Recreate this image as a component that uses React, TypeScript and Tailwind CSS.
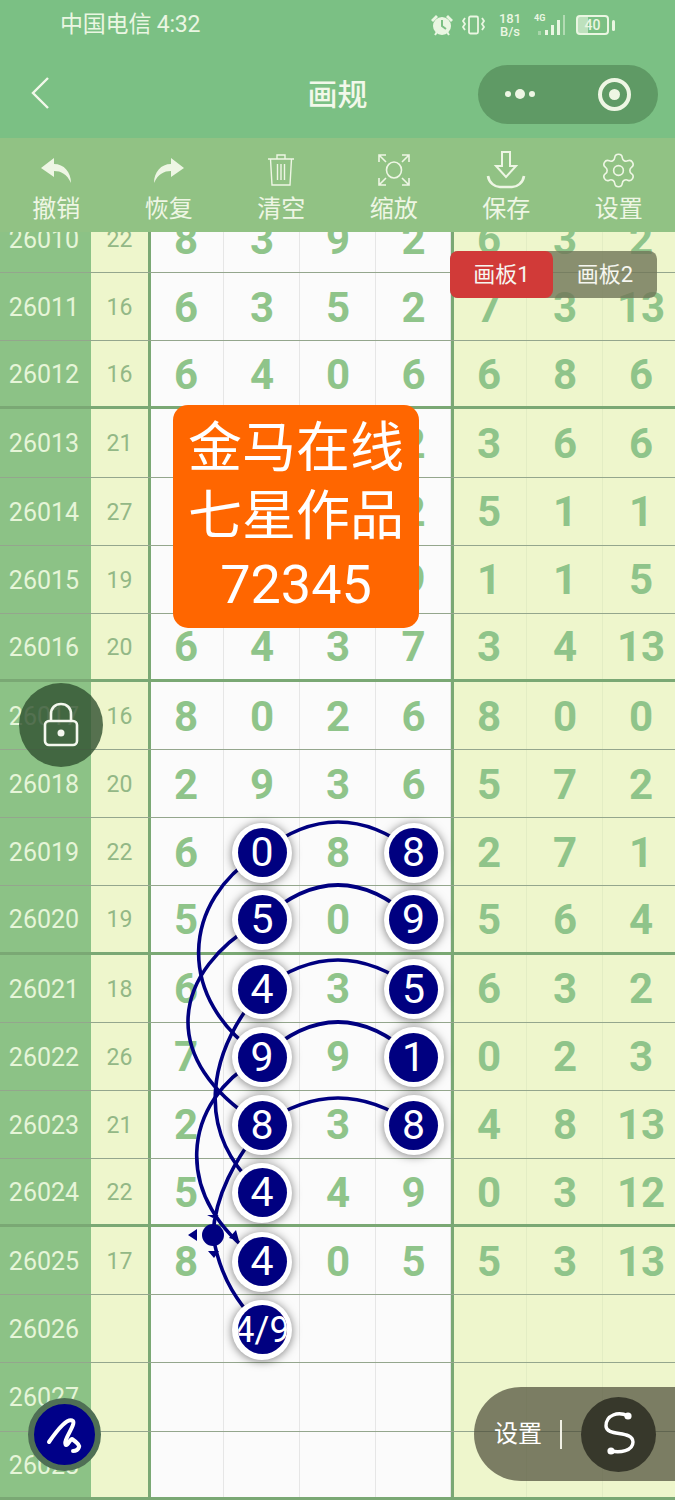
import React, { FC } from "react";
import { Settings } from "lucide-react";

type Row = {
  id: string;
  sum: string;
  cells: string[];
};

const rows: Row[] = [
  { id: "26010", sum: "22", cells: ["8", "3", "9", "2", "6", "3", "2"] },
  { id: "26011", sum: "16", cells: ["6", "3", "5", "2", "7", "3", "13"] },
  { id: "26012", sum: "16", cells: ["6", "4", "0", "6", "6", "8", "6"] },
  { id: "26013", sum: "21", cells: ["1", "8", "5", "2", "3", "6", "6"] },
  { id: "26014", sum: "27", cells: ["9", "7", "4", "2", "5", "1", "1"] },
  { id: "26015", sum: "19", cells: ["3", "2", "6", "9", "1", "1", "5"] },
  { id: "26016", sum: "20", cells: ["6", "4", "3", "7", "3", "4", "13"] },
  { id: "26017", sum: "16", cells: ["8", "0", "2", "6", "8", "0", "0"] },
  { id: "26018", sum: "20", cells: ["2", "9", "3", "6", "5", "7", "2"] },
  { id: "26019", sum: "22", cells: ["6", "0", "8", "8", "2", "7", "1"] },
  { id: "26020", sum: "19", cells: ["5", "5", "0", "9", "5", "6", "4"] },
  { id: "26021", sum: "18", cells: ["6", "4", "3", "5", "6", "3", "2"] },
  { id: "26022", sum: "26", cells: ["7", "9", "9", "1", "0", "2", "3"] },
  { id: "26023", sum: "21", cells: ["2", "8", "3", "8", "4", "8", "13"] },
  { id: "26024", sum: "22", cells: ["5", "4", "4", "9", "0", "3", "12"] },
  { id: "26025", sum: "17", cells: ["8", "4", "0", "5", "5", "3", "13"] },
  { id: "26026", sum: "", cells: ["", "4/9", "", "", "", "", ""] },
  { id: "26027", sum: "", cells: ["", "", "", "", "", "", ""] },
  { id: "26028", sum: "", cells: ["", "", "", "", "", "", ""] },
];

// which cells carry a round marker: row id -> cell indexes
const marked: Record<string, number[]> = {
  "26019": [1, 3],
  "26020": [1, 3],
  "26021": [1, 3],
  "26022": [1, 3],
  "26023": [1, 3],
  "26024": [1],
  "26025": [1],
  "26026": [1],
};

const Marker: FC<{ value: string }> = ({ value }) => (
  <div className="relative z-20 flex h-[60px] w-[60px] items-center justify-center rounded-full bg-white shadow-[0_1px_10px_rgba(0,0,0,0.5)]">
    <div
      className={`flex h-[49px] w-[49px] items-center justify-center overflow-hidden whitespace-nowrap rounded-full bg-[#000080] font-normal leading-none text-white ${
        value.length > 1 ? "text-[36px]" : "text-[41px]"
      }`}
    >
      {value}
    </div>
  </div>
);

const ToolIcon: FC<{ name: string }> = ({ name }) => {
  if (name === "undo") {
    return (
      <svg width="32" height="28" viewBox="0 0 32 28" fill="#eef6e4">
        <path d="M14 2 L1 12 L14 21 V15 C21 15 27 18 31 27 C31 16 24 8 14 8 Z" />
      </svg>
    );
  }
  if (name === "redo") {
    return (
      <svg width="32" height="28" viewBox="0 0 32 28" fill="#eef6e4">
        <path d="M18 2 L31 12 L18 21 V15 C11 15 5 18 1 27 C1 16 8 8 18 8 Z" />
      </svg>
    );
  }
  if (name === "trash") {
    return (
      <svg width="28" height="34" viewBox="0 0 28 34" fill="none" stroke="#eef6e4" strokeWidth="1.4">
        <path d="M1 6 H27 M10 6 V2 H18 V6 M3.5 6 L5 32 H23 L24.5 6 M10.5 11 V27 M14 11 V27 M17.5 11 V27" />
      </svg>
    );
  }
  if (name === "zoom") {
    return (
      <svg width="34" height="34" viewBox="0 0 34 34" fill="none" stroke="#eef6e4" strokeWidth="1.6">
        <path d="M2 9 V2 H9 M2 2 L9 9 M32 9 V2 H25 M32 2 L25 9 M2 25 V32 H9 M2 32 L9 25 M32 25 V32 H25 M32 32 L25 25" />
        <ellipse cx="17" cy="17" rx="7.5" ry="8" />
      </svg>
    );
  }
  if (name === "save") {
    return (
      <svg width="40" height="40" viewBox="0 0 40 40" fill="none" stroke="#eef6e4" strokeWidth="2">
        <path d="M16 2 H24 V16 H30 L20 27 L10 16 H16 Z" />
        <path d="M2 26 C3 33 9 37 14 37 H26 C31 37 37 33 38 26" strokeWidth="2.6" />
      </svg>
    );
  }
  return <Settings size={39} strokeWidth={1} color="#eef6e4" />;
};

const tools = [
  { icon: "undo", label: "撤销" },
  { icon: "redo", label: "恢复" },
  { icon: "trash", label: "清空" },
  { icon: "zoom", label: "缩放" },
  { icon: "save", label: "保存" },
  { icon: "gear", label: "设置" },
];

const StatusIcons: FC = () => (
  <div className="flex items-center">
    <svg width="24" height="22" viewBox="0 0 24 22" className="mr-[7px]">
      <path d="M1 6 L6 1 L8 3 L3 8 Z M23 6 L18 1 L16 3 L21 8 Z" fill="#eaf6e2" />
      <circle cx="12" cy="12" r="9" fill="#eaf6e2" />
      <path d="M12 6 V12 L16 15" fill="none" stroke="#7cc084" strokeWidth="2" />
      <path d="M5 21 L7 18 M19 21 L17 18" stroke="#eaf6e2" strokeWidth="2" />
    </svg>
    <svg width="25" height="20" viewBox="0 0 25 20" fill="none" stroke="#eaf6e2" strokeWidth="1.8" className="mr-[11px]">
      <rect x="8" y="1.5" width="9" height="17" rx="1.5" />
      <path d="M4 3 L2 6 L4 9 L2 12 L4 15 M21 3 L23 6 L21 9 L23 12 L21 15" />
    </svg>
    <div className="mr-[11px] flex w-[26px] flex-col items-center text-[13px] font-medium leading-[13px] text-[#eaf6e2]">
      <span>181</span>
      <span>B/s</span>
    </div>
    <div className="relative mr-[9px] h-[22px] w-[33px]">
      <span className="absolute left-0 top-[-1px] text-[9px] font-bold leading-[10px] text-[#eaf6e2]">4G</span>
      <svg width="33" height="22" viewBox="0 0 33 22" fill="#eaf6e2">
        <rect x="4" y="17" width="3" height="4" opacity="0.4" />
        <rect x="11" y="16" width="3" height="5" />
        <rect x="17" y="11" width="3" height="10" />
        <rect x="23" y="6" width="3" height="15" />
        <rect x="29" y="1" width="2" height="20" opacity="0.5" />
      </svg>
    </div>
    <div className="flex items-center gap-[3px]">
      <div className="relative flex h-[20px] w-[33px] items-center justify-center rounded-[4px] border-2 border-[#eaf6e2] text-[14px] font-medium leading-none text-[#eaf6e2]">
        <div className="absolute inset-y-0 left-0 w-[10px] bg-[#eaf6e2]/60" />
        <span className="relative">40</span>
      </div>
      <div className="h-[11px] w-[3px] rounded-full bg-[#eaf6e2]" />
    </div>
  </div>
);

const App: FC = () => {
  return (
    <div className="relative flex h-[1500px] w-[675px] flex-col overflow-hidden bg-white font-[Roboto,'Noto_Sans_CJK_SC',sans-serif]">
      {/* status bar + title */}
      <div className="bg-[#7bc084]">
        <div className="flex h-[50px] items-center justify-between pl-[60px] pr-[60px]">
          <span className="text-[23px] tracking-[-0.2px] text-[#eaf6e2]">中国电信 4:32</span>
          <StatusIcons />
        </div>
        <div className="grid h-[88px] grid-cols-[1fr_auto_1fr] items-center">
          <div className="pb-[2px] pl-[30px]">
            <svg width="20" height="32" viewBox="0 0 20 32" fill="none" stroke="#f2f8ea" strokeWidth="2.4">
              <path d="M18 1 L3 16 L18 31" />
            </svg>
          </div>
          <span className="pt-[2px] text-[30px] font-medium leading-none text-[#f2f8ea]">画规</span>
          <div className="flex justify-end pr-[17px]">
            <div className="flex h-[59px] w-[180px] items-center rounded-full bg-[#5f9a65] pl-[27px]">
              <div className="flex items-center gap-[4px]">
                <div className="h-[6px] w-[6px] rounded-full bg-[#eef6e4]" />
                <div className="h-[10px] w-[10px] rounded-full bg-[#eef6e4]" />
                <div className="h-[6px] w-[6px] rounded-full bg-[#eef6e4]" />
              </div>
              <div className="ml-[63px] flex h-[33px] w-[33px] items-center justify-center rounded-full border-[4px] border-[#eef6e4]">
                <div className="h-[11px] w-[11px] rounded-full bg-[#eef6e4]" />
              </div>
            </div>
          </div>
        </div>
      </div>

      {/* toolbar */}
      <div className="grid h-[94px] grid-cols-6 bg-[#91c284]">
        {tools.map((t) => (
          <div key={t.label} className="flex flex-col items-center">
            <div className="mt-[12px] flex h-[40px] items-center justify-center">
              <ToolIcon name={t.icon} />
            </div>
            <span className="mt-[5px] text-[24px] leading-[28px] text-[#eef6e4]">{t.label}</span>
          </div>
        ))}
      </div>

      {/* table */}
      <div className="flex-1 overflow-hidden">
        <div className="mt-[-27px]">
          {rows.map((r, i) => {
            const thick = (i + 2) % 4 === 0 || i === 18;
            return (
              <div
                key={r.id}
                className={`grid h-[68.15px] w-[679px] grid-cols-[91px_57px_76px_76px_76px_75px_76px_76px_76px] ${
                  thick ? "border-b-[3px] border-[#7aa874]" : "border-b border-[#94a68d]"
                }`}
              >
                <div className="flex items-center justify-center bg-[#8cc286] pr-[3px] pt-[2px] text-[25px] leading-none text-[#e6f5d8]">
                  {r.id}
                </div>
                <div className="flex items-center justify-center bg-[#eef6cc] pt-[2px] text-[23px] leading-none text-[#93b886]">
                  {r.sum}
                </div>
                {r.cells.map((c, j) => {
                  const isMarked = (marked[r.id] || []).includes(j);
                  return (
                    <div
                      key={j}
                      className={`flex items-center justify-center pt-[2px] text-[42px] font-bold leading-none text-[#8fc48a] ${
                        j < 4 ? "bg-[#fbfbfb]" : "bg-[#eef6cc]"
                      } ${
                        j === 0
                          ? "shadow-[inset_3px_0_0_#7aa874,inset_-1px_0_0_#e6e6e6]"
                          : j === 4
                            ? "shadow-[inset_3px_0_0_#7aa874,inset_-1px_0_0_#e3edc4]"
                            : j < 4
                              ? "shadow-[inset_-1px_0_0_#e6e6e6]"
                              : "shadow-[inset_-1px_0_0_#e3edc4]"
                      }`}
                    >
                      {isMarked ? <Marker value={c} /> : c}
                    </div>
                  );
                })}
              </div>
            );
          })}
        </div>
      </div>

      {/* connecting curves */}
      <svg
        width="675"
        height="1500"
        viewBox="0 0 675 1500"
        fill="none"
        stroke="#000080"
        strokeWidth="3.6"
        className="pointer-events-none absolute left-0 top-0 z-10"
      >
        <path d="M262 852 Q338 792 414 852" />
        <path d="M262 920 Q338 850 414 920" />
        <path d="M262 989 Q338 931 414 989" />
        <path d="M262 1057 Q338 987 414 1057" />
        <path d="M262 1125 Q338 1071 414 1125" />
        <path d="M262 852 C180 900 175 1000 262 1057" />
        <path d="M262 920 C172 970 155 1060 262 1125" />
        <path d="M262 989 C210 1050 190 1130 262 1193" />
        <path d="M262 1057 C180 1100 170 1200 262 1261" />
        <path d="M262 1125 C235 1160 215 1195 213 1235" />
        <path d="M262 1329 C240 1305 220 1280 213 1235" />
        <circle cx="213" cy="1235" r="11" fill="#000080" stroke="none" />
        <path d="M188 1235 L197 1229 V1241 Z M213 1218 L207 1215 H219 Z M208 1251 H219 L214 1258 Z M239 1241 L229 1238 L236 1230 Z" fill="#000080" stroke="none" />
      </svg>

      {/* board tabs */}
      <div className="absolute left-[450px] top-[251px] z-30 flex h-[47px] w-[207px] rounded-[8px] bg-[#6f7557]/80 text-[22px] leading-none text-[#f6f6f0]">
        <div className="flex w-[103px] items-center justify-center rounded-[8px] bg-[#d13a38]">画板1</div>
        <div className="flex flex-1 items-center justify-center">画板2</div>
      </div>

      {/* orange notice */}
      <div className="absolute left-[173px] top-[405px] z-30 flex h-[223px] w-[246px] flex-col items-center justify-center rounded-[15px] bg-[#ff6600] text-[54px] leading-[68px] text-white">
        <span>金马在线</span>
        <span>七星作品</span>
        <span>72345</span>
      </div>

      {/* lock */}
      <div className="absolute left-[19px] top-[683px] z-30 flex h-[84px] w-[84px] items-center justify-center rounded-full bg-[#2f5030]/80">
        <svg width="36" height="46" viewBox="0 0 36 46" fill="none" stroke="#f4f8ee" strokeWidth="2.6">
          <path d="M8 19 V12 C8 6 12 2 18 2 C24 2 28 6 28 12 V19" />
          <rect x="2" y="19" width="32" height="24" rx="4" />
          <circle cx="18" cy="31" r="3.5" fill="#f4f8ee" stroke="none" />
        </svg>
      </div>

      {/* pen button */}
      <div className="absolute left-[28px] top-[1398px] z-30 flex h-[73px] w-[73px] items-center justify-center rounded-full border-[6px] border-[#4f6f55] bg-[#000088]">
        <svg width="40" height="40" viewBox="45 1414 40 40" fill="none" stroke="#fff" strokeWidth="4" strokeLinecap="round" strokeLinejoin="round">
          <path d="M49 1441 C58 1428 68 1416 73 1420 C76 1424 62 1440 66 1444 C68 1445 70 1438 72 1438 C75 1440 80 1444 79 1446 C78 1449 75 1450 73 1450" />
        </svg>
      </div>

      {/* settings pill */}
      <div className="absolute left-[474px] top-[1387px] z-30 flex h-[94px] w-[201px] items-center rounded-l-full bg-[#4a4a36]/70 pl-[20px]">
        <span className="text-[24px] leading-none text-white">设置</span>
        <div className="ml-[18px] h-[29px] w-[2px] bg-[#f0f0e4]" />
        <div className="ml-[19px] flex h-[75px] w-[75px] items-center justify-center rounded-full bg-[#37382b]">
          <svg width="44" height="50" viewBox="597 1410 44 50" fill="none" stroke="#fff" strokeWidth="3.4" strokeLinecap="round">
            <path d="M628 1417 C618 1412 606 1416 606 1427 C606 1438 633 1431 633 1443 C633 1452 620 1454 611 1452" />
            <circle cx="628" cy="1417" r="3.6" fill="#fff" stroke="none" />
            <circle cx="611" cy="1452" r="3.6" fill="#fff" stroke="none" />
          </svg>
        </div>
      </div>
    </div>
  );
};

export default App;
